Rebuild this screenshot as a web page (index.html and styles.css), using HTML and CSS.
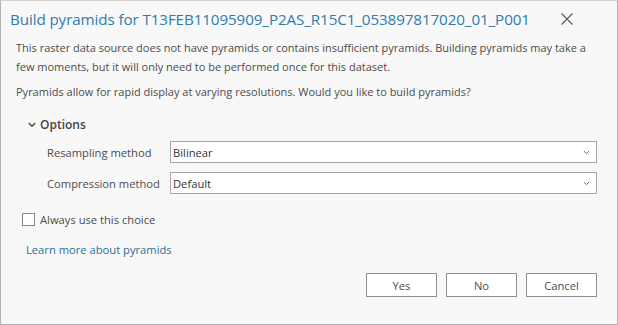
FILE: index.html
```html
<html>
<head>
    <meta charset="utf-8"/>
    <title>Build pyramids</title>
    <link rel="stylesheet" href="styles.css">
</head>
<body>
<div id="dialog">
    <div id="titlebar">
        <div id="title">Build pyramids for T13FEB11095909_P2AS_R15C1_053897817020_01_P001</div>
        <div id="close">
            <svg width="12" height="12" viewBox="0 0 12 12"><path d="M0.5 0.5 L11.5 11.5 M11.5 0.5 L0.5 11.5" stroke="#5a5a5a" stroke-width="1.1" fill="none"/></svg>
        </div>
    </div>
    <div id="content">
        <p class="msg">This raster data source does not have pyramids or contains insufficient pyramids. Building pyramids may take a few moments, but it will only need to be performed once for this dataset.</p>
        <p class="msg second">Pyramids allow for rapid display at varying resolutions. Would you like to build pyramids?</p>

        <div id="options-head">
            <svg class="chev" width="8" height="6" viewBox="0 0 8 6"><path d="M0.8 1 L4 4.2 L7.2 1" stroke="#4c4c4c" stroke-width="1.6" fill="none"/></svg>
            <span>Options</span>
        </div>
        <div id="fields">
            <div class="field-label">Resampling method</div>
            <div class="select">
                <span>Bilinear</span>
                <svg width="7" height="5" viewBox="0 0 7 5"><path d="M0.8 1 L3.5 3.6 L6.2 1" stroke="#6a6a6a" stroke-width="1" fill="none"/></svg>
            </div>
            <div class="field-label">Compression method</div>
            <div class="select">
                <span>Default</span>
                <svg width="7" height="5" viewBox="0 0 7 5"><path d="M0.8 1 L3.5 3.6 L6.2 1" stroke="#6a6a6a" stroke-width="1" fill="none"/></svg>
            </div>
        </div>

        <label id="always">
            <span class="box"></span>
            Always use this choice
        </label>

        <a id="learn" href="#">Learn more about pyramids</a>

        <div id="actions">
            <button class="btn">Yes</button>
            <button class="btn">No</button>
            <button class="btn">Cancel</button>
        </div>
    </div>
</div>
</body>
</html>
```

FILE: styles.css
```css
body, html {
    margin: 0px;
    padding: 0px;
}

body {
    width: 618px;
    height: 325px;
    font-family: 'Open Sans', sans-serif;
}

#dialog {
    width: 618px;
    height: 325px;
    box-sizing: border-box;
    background-color: #f8f8f8;
    border: 1px solid #b2b2b2;
    border-top-color: #d4d4d4;
    display: flex;
    flex-direction: column;
}

#titlebar {
    flex: 0 0 36px;
    display: flex;
    flex-direction: row;
    align-items: center;
    padding-left: 9px;
    padding-right: 44px;
}

#title {
    flex: 1;
    min-width: 0;
    font-size: 15.2px;
    color: #2f7cb0;
    letter-spacing: -0.1px;
    white-space: nowrap;
}

#close {
    display: flex;
    align-items: center;
}

#content {
    display: flex;
    flex-direction: column;
    padding: 1px 20px 0px 15px;
}

.msg {
    margin: 0px;
    font-size: 11px;
    line-height: 19px;
    color: #4c4c4c;
}

.msg.second {
    margin-top: 6px;
}

#options-head {
    margin-top: 13px;
    margin-left: 12px;
    display: flex;
    align-items: center;
    height: 20px;
    font-size: 12px;
    font-weight: 600;
    color: #444444;
}

.chev {
    margin-right: 4px;
    margin-top: 1px;
}

#fields {
    margin-top: 7px;
    margin-left: 31px;
    display: grid;
    grid-template-columns: 123px 1fr;
    row-gap: 9px;
    align-items: center;
}

.field-label {
    font-size: 11.2px;
    color: #4c4c4c;
}

.select {
    height: 22px;
    box-sizing: border-box;
    background-color: #ffffff;
    border: 1px solid #a6a6a6;
    display: flex;
    align-items: center;
    justify-content: space-between;
    padding: 0px 6px 0px 2px;
    font-size: 11.2px;
    color: #333333;
}

#always {
    margin-top: 15px;
    margin-left: 6px;
    display: flex;
    align-items: center;
    height: 20px;
    font-size: 11.2px;
    color: #4c4c4c;
}

.box {
    width: 13px;
    height: 13px;
    box-sizing: border-box;
    border: 1px solid #8a8a8a;
    background-color: #ffffff;
    margin-right: 5px;
}

#learn {
    margin-top: 11px;
    margin-left: 10px;
    font-size: 11.2px;
    line-height: 20px;
    color: #2a6f97;
    text-decoration: none;
    align-self: flex-start;
}

#actions {
    margin-top: 13px;
    display: flex;
    justify-content: flex-end;
    gap: 9px;
}

.btn {
    width: 71px;
    height: 24px;
    margin: 0px;
    padding: 0px;
    font-family: 'Open Sans', sans-serif;
    font-size: 11.2px;
    color: #4c4c4c;
    background-color: #ffffff;
    border: 1px solid #8f8f8f;
}
```
